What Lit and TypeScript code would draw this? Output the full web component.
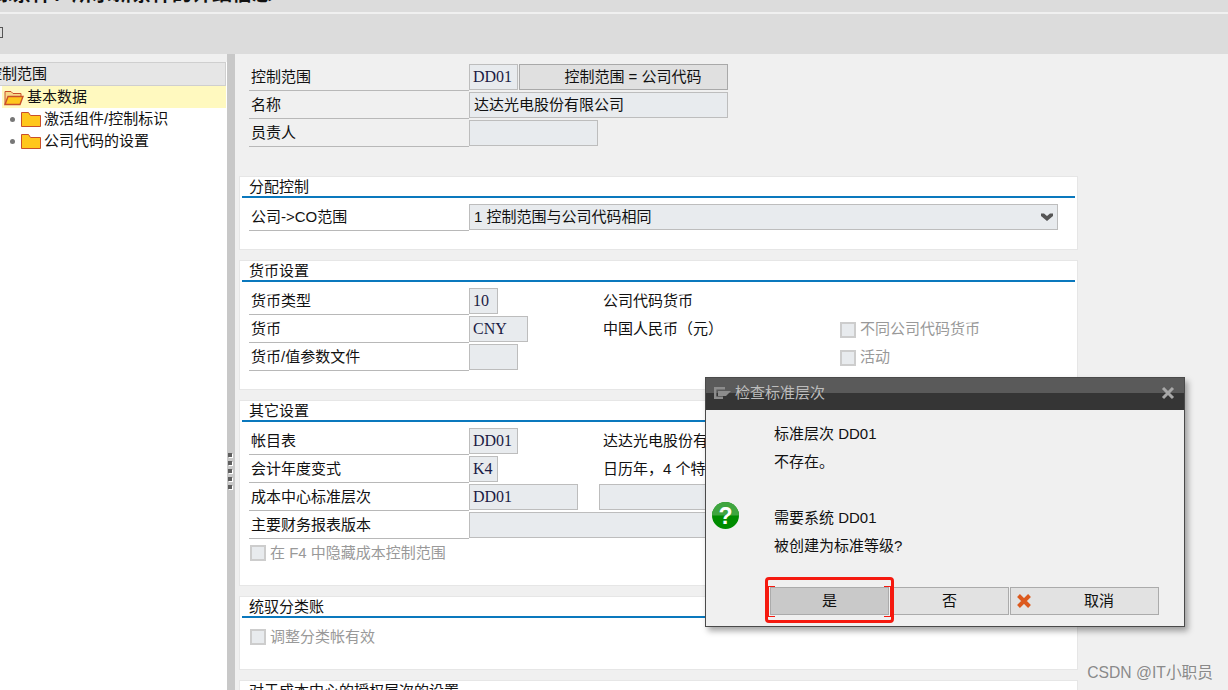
import { LitElement, html, css } from "lit";
import { customElement } from "lit/decorators.js";

const folderClosed = html`<svg class="folder" width="20" height="17" viewBox="0 0 20 17"><path d="M.5 15.5V1.5h7l2 3h10v11z" fill="#ffc71c" stroke="#c9502a"/></svg>`;
const folderOpen = html`<svg class="folder" width="20" height="17" viewBox="0 0 20 17"><path d="M1 15.5V2.5h6l2 2h8v3" fill="#f7d98a" stroke="#c9502a"/><path d="M1 15.5l3-8h15l-3 8z" fill="#ffc71c" stroke="#c9502a" stroke-width="1.4"/></svg>`;

@customElement("app-root")
export class AppRoot extends LitElement {
  static styles = css`
    :host {
      display: block;
      position: relative;
      width: 1228px;
      height: 690px;
      overflow: hidden;
      background: #f0f0f0;
      color: #111;
      font: 15px/20px "Liberation Sans", "Noto Sans CJK SC", sans-serif;
    }
    .titlebar { height: 12px; background: #dcdcdc; overflow: hidden; }
    .titletext {
      margin: -18px 0 0 -8px;
      font-size: 20px;
      line-height: 24px;
      font-weight: 700;
      white-space: nowrap;
    }
    .toolbar { margin-top: 2px; padding-top: 13px; box-sizing: border-box; height: 40px; background: #dcdcdc; }
    .tb-glyph { display: block; width: 3px; height: 11px; border: 1px solid #555; border-left: 0; box-sizing: border-box; }
    .body { display: flex; height: 636px; }
    .tree { width: 227px; flex: none; background: #fff; overflow: hidden; }
    .tree-top { height: 8px; background: #f0f0f0; }
    .tree-head {
      height: 24px; box-sizing: border-box; margin-right: 1px;
      background: #e6e6e6; border: 1px solid #cfcfcf; border-left: 0; line-height: 22px;
      white-space: nowrap; overflow: hidden;
    }
    .tree-head span { display: block; margin-left: -13px; }
    .node { height: 22px; display: flex; align-items: center; white-space: nowrap; line-height: 20px; }
    .node span { display: block; }
    .node.sel { margin: 0 1px 0 2px; padding-left: 2px; background: #fff9bf; }
    .node .folder { margin-right: 3px; }
    .node.child { padding-left: 10px; }
    .bullet { width: 5px; height: 5px; border-radius: 50%; background: #777; margin-right: 6px; }

    .split {
      width: 8px; flex: none; background: #c8c8c8;
      display: flex; flex-direction: column; align-items: flex-start;
      gap: 4px; padding: 399px 0 0 1px; box-sizing: border-box;
    }
    .split i { display: block; width: 4px; height: 4px; background: #5f5f5f; box-shadow: 1px 1px 0 #fff; }

    .main { flex: 1; padding: 10px 0 0 4px; box-sizing: border-box; overflow: hidden; }
    .head-rows { display: flex; flex-direction: column; gap: 2px; margin-bottom: 30px; padding-left: 10px; }
    .rows { display: flex; flex-direction: column; gap: 2px; padding: 6px 0 0 9px; }
    .row { display: grid; grid-template-columns: 220px 130px 241px auto; height: 26px; align-items: stretch; }
    .label { border-bottom: 1px solid #b8b8b8; padding-left: 2px; line-height: 26px; box-sizing: border-box; white-space: nowrap; }
    .fields { display: flex; gap: 1px; min-width: 0; }
    .span { grid-column: 2 / span 3; }
    .input {
      box-sizing: border-box; height: 26px; background: #e8ebee; border: 1px solid #bdbdbd;
      padding-left: 4px; line-height: 24px; white-space: nowrap; overflow: hidden; flex: none;
    }
    .code { padding-left: 3px; font-family: "Liberation Serif", serif; font-size: 16px; line-height: 24px; color: #1b1b44; }
    .btn-inline {
      box-sizing: border-box; width: 209px; height: 26px; background: #e0e0e0; border: 1px solid #a9a9a9;
      text-align: center; line-height: 24px; padding-left: 19px;
    }
    .plain { padding-left: 4px; line-height: 26px; white-space: nowrap; overflow: hidden; }
    .check { display: flex; align-items: center; gap: 4px; color: #999; white-space: nowrap; }
    .check span { display: block; margin-top: -1px; }
    .check i { display: block; width: 16px; height: 16px; box-sizing: border-box; background: #e8ebee; border: 2px solid #cdcdcd; }
    .cb-row { padding-left: 1px; grid-column: 1 / span 4; }
    .select { position: relative; width: 589px; }
    .select svg { position: absolute; right: 3px; top: 7px; }

    .section {
      width: 839px; box-sizing: border-box; background: #fff; border: 1px solid #e6e6e6;
      padding-bottom: 19px; margin-bottom: 10px;
    }
    .sec-title { height: 19px; padding-left: 9px; line-height: 20px; white-space: nowrap; }
    .sec-line { height: 2px; background: #0a78bd; margin: 0 2px; }

    .dialog {
      position: absolute; left: 705px; top: 377px; width: 480px; height: 250px; box-sizing: border-box;
      background: #f0f0f0; border: 1px solid #4a4a4a;
      box-shadow: 3px 4px 6px rgba(0,0,0,.35);
    }
    .dlg-title {
      height: 32px; display: flex; align-items: center; gap: 3px; padding: 0 9px 3px 7px; box-sizing: border-box;
      background: linear-gradient(#5a5a5a 0 15px, #353535 15px);
      color: #bdbdbd; line-height: 20px;
    }
    .dlg-title .grow { flex: 1; }
    .dlg-body { display: flex; height: 178px; padding: 10px 0 0 6px; box-sizing: border-box; }
    .dlg-icon { width: 62px; flex: none; margin-top: 82px; }
    .dlg-text div { height: 28px; line-height: 28px; white-space: nowrap; }
    .dlg-btns { display: flex; gap: 1px; margin: -1px 0 0 64px; }
    .dbtn {
      position: relative; box-sizing: border-box; height: 28px; background: #e2e2e2; border: 1px solid #ababab;
      text-align: center; line-height: 26px;
    }
    .dbtn.yes { width: 119px; background: #c9c9c9; }
    .dbtn.no { width: 119px; }
    .dbtn.cancel { width: 149px; padding-left: 29px; text-align: center; }
    .dbtn.cancel svg { position: absolute; left: 5px; top: 5px; }
    .mark { position: absolute; left: 59px; top: 199px; width: 129px; height: 46px; box-sizing: border-box; border: 3px solid #f5190f; border-radius: 4px; pointer-events: none; }
    .corner { position: absolute; top: 6px; width: 7px; height: 31px; box-sizing: border-box; border: 1px solid #f5190f; }
    .c1 { left: 0; border-right: 0; }
    .c2 { right: 0; border-left: 0; }
    .watermark {
      position: absolute; right: 15px; bottom: 7px; color: rgba(110,110,110,.8); font-size: 15.7px; line-height: 20px;
      font-family: "Liberation Sans", "Noto Sans CJK SC", sans-serif;
    }
  `;

  render() {
    return html`
      <div class="titlebar"><div class="titletext">标条件：所示新条件的详细信息</div></div>
      <div class="toolbar"><i class="tb-glyph"></i></div>
      <div class="body">
        <div class="tree">
          <div class="tree-top"></div>
          <div class="tree-head"><span>控制范围</span></div>
          <div class="node sel">${folderOpen}<span>基本数据</span></div>
          <div class="node child"><i class="bullet"></i>${folderClosed}<span>激活组件/控制标识</span></div>
          <div class="node child"><i class="bullet"></i>${folderClosed}<span>公司代码的设置</span></div>
        </div>
        <div class="split"><i></i><i></i><i></i><i></i><i></i></div>
        <div class="main">
          <div class="head-rows">
            <div class="row">
              <div class="label">控制范围</div>
              <div class="fields span">
                <div class="input code" style="width:49px">DD01</div>
                <div class="btn-inline">控制范围 = 公司代码</div>
              </div>
            </div>
            <div class="row">
              <div class="label">名称</div>
              <div class="fields span"><div class="input" style="width:259px">达达光电股份有限公司</div></div>
            </div>
            <div class="row">
              <div class="label">员责人</div>
              <div class="fields span"><div class="input" style="width:129px"></div></div>
            </div>
          </div>

          <div class="section">
            <div class="sec-title">分配控制</div>
            <div class="sec-line"></div>
            <div class="rows">
              <div class="row">
                <div class="label">公司->CO范围</div>
                <div class="fields span">
                  <div class="input select">1 控制范围与公司代码相同
                    <svg width="14" height="10" viewBox="0 0 14 10"><path d="M1 1.5h3L7 4l3-2.5h3V4L7 9 1 4z" fill="#555"/></svg>
                  </div>
                </div>
              </div>
            </div>
          </div>

          <div class="section">
            <div class="sec-title">货币设置</div>
            <div class="sec-line"></div>
            <div class="rows">
              <div class="row">
                <div class="label">货币类型</div>
                <div class="fields"><div class="input code" style="width:29px">10</div></div>
                <div class="plain">公司代码货币</div>
              </div>
              <div class="row">
                <div class="label">货币</div>
                <div class="fields"><div class="input code" style="width:59px">CNY</div></div>
                <div class="plain">中国人民币（元）</div>
                <div class="check"><i></i><span>不同公司代码货币</span></div>
              </div>
              <div class="row">
                <div class="label">货币/值参数文件</div>
                <div class="fields"><div class="input" style="width:49px"></div></div>
                <div class="plain"></div>
                <div class="check"><i></i><span>活动</span></div>
              </div>
            </div>
          </div>

          <div class="section">
            <div class="sec-title">其它设置</div>
            <div class="sec-line"></div>
            <div class="rows">
              <div class="row">
                <div class="label">帐目表</div>
                <div class="fields"><div class="input code" style="width:49px">DD01</div></div>
                <div class="plain">达达光电股份有限公司</div>
              </div>
              <div class="row">
                <div class="label">会计年度变式</div>
                <div class="fields"><div class="input code" style="width:29px">K4</div></div>
                <div class="plain">日历年，4 个特殊期间</div>
              </div>
              <div class="row">
                <div class="label">成本中心标准层次</div>
                <div class="fields"><div class="input code" style="width:109px">DD01</div></div>
                <div class="fields"><div class="input" style="width:129px"></div></div>
              </div>
              <div class="row">
                <div class="label">主要财务报表版本</div>
                <div class="fields span"><div class="input" style="width:259px"></div></div>
              </div>
              <div class="row">
                <div class="check cb-row"><i></i><span>在 F4 中隐藏成本控制范围</span></div>
              </div>
            </div>
          </div>

          <div class="section">
            <div class="sec-title">统驭分类账</div>
            <div class="sec-line"></div>
            <div class="rows">
              <div class="row"><div class="check cb-row"><i></i><span>调整分类帐有效</span></div></div>
            </div>
          </div>

          <div class="section">
            <div class="sec-title">对于成本中心的授权层次的设置</div>
            <div class="sec-line"></div>
          </div>
        </div>
      </div>

      <div class="dialog">
        <div class="dlg-title">
          <svg width="19" height="14" viewBox="0 0 19 14">
            <path d="M1 1h11v2.4H3.4v7.2H10V13H1z" fill="#8c8c8c"/>
            <path d="M5 5h13l-5 5H5z" fill="#8c8c8c"/>
          </svg>
          <span>检查标准层次</span>
          <span class="grow"></span>
          <svg width="14" height="14" viewBox="0 0 14 14"><path d="M2 2l10 10M12 2 2 12" stroke="#a8a8a8" stroke-width="3"/></svg>
        </div>
        <div class="dlg-body">
          <div class="dlg-icon">
            <svg width="27" height="27" viewBox="0 0 27 27">
              <circle cx="13.5" cy="13.5" r="13.5" fill="#008c00"/>
              <path d="M0 13.5a13.5 13.5 0 0 1 27 0z" fill="#3fa53f"/>
              <text x="13.5" y="21.5" text-anchor="middle" font-family="Liberation Sans" font-weight="700" font-size="23" fill="#fff">?</text>
            </svg>
          </div>
          <div class="dlg-text">
            <div>标准层次 DD01</div>
            <div>不存在。</div>
            <div></div>
            <div>需要系统 DD01</div>
            <div>被创建为标准等级?</div>
          </div>
        </div>
        <div class="dlg-btns">
          <div class="dbtn yes">是</div>
          <div class="dbtn no">否</div>
          <div class="dbtn cancel">
            <svg width="16" height="16" viewBox="0 0 16 16"><path d="M2.5 2.5l11 11M13.5 2.5l-11 11" stroke="#dc5a1e" stroke-width="4"/></svg>
            取消
          </div>
        </div>
        <div class="mark">
          <i class="corner c1"></i><i class="corner c2"></i>
        </div>
      </div>
      <div class="watermark">CSDN @IT小职员</div>
    `;
  }
}
